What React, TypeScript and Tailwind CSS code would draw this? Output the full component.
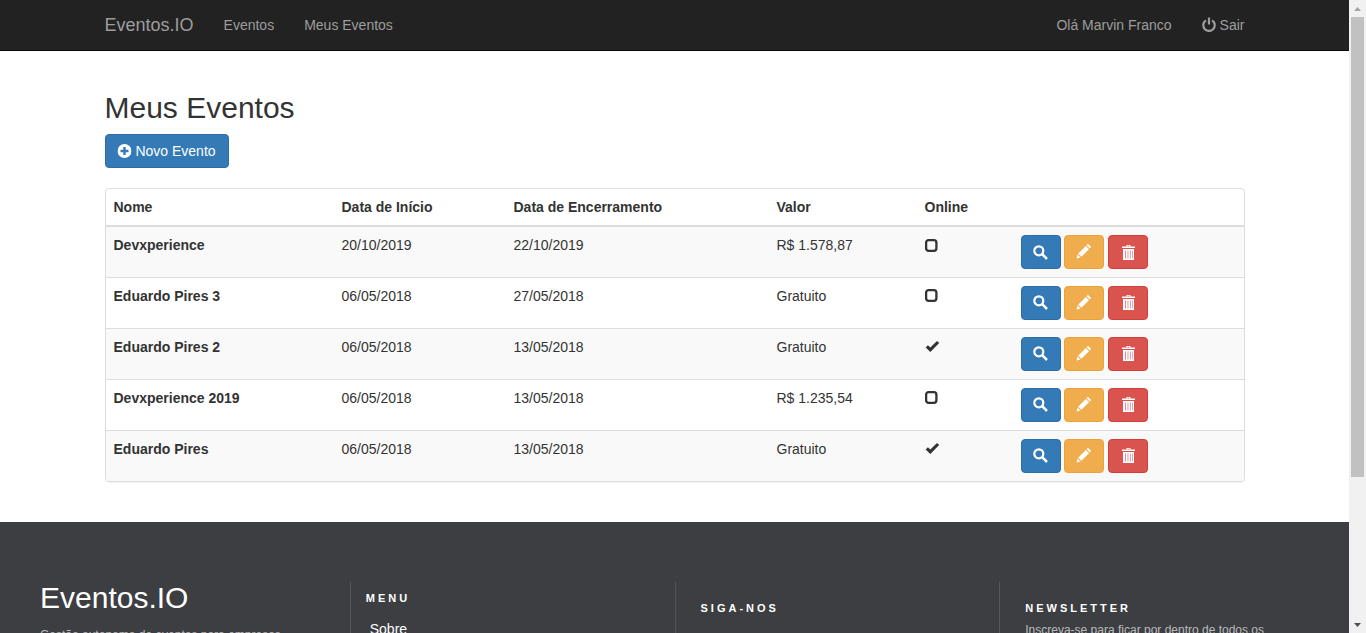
import React from "react";

const Off = () => (
  <svg width="14" height="15" viewBox="0 0 14 15" fill="none" stroke="currentColor" strokeWidth="2.200" className="-translate-y-[1px]">
    <path d="M4 3.400A5.700 5.700 0 1 0 10 3.400" />
    <path d="M7 0.500V7.500" />
  </svg>
);
const Plus = () => (
  <svg width="14" height="14" viewBox="0 0 14 14" className="translate-x-[0.500px]">
    <path fillRule="evenodd" fill="#fff" d="M7 0a7 7 0 1 1 0 14A7 7 0 0 1 7 0ZM5.800 3V5.800H3v2.400h2.800V11h2.400V8.200H11V5.800H8.200V3Z" />
  </svg>
);
const Search = () => (
  <svg width="15" height="15" viewBox="0 0 15 15" fill="none" stroke="#fff">
    <circle cx="5.800" cy="5.800" r="4.500" strokeWidth="2.200" />
    <path d="M9.200 9.200L14 14" strokeWidth="2.500" />
  </svg>
);
const Pencil = () => (
  <svg width="16" height="16" viewBox="0 0 15 15" fill="#fff" className="-translate-y-[1px]">
    <path d="M11.200 0.800L14.200 3.800L12.900 5.100L9.900 2.100ZM9.200 2.800L12.200 5.800L5 13L2 10ZM1.400 10.800L4.200 13.600L0.500 14.500Z" />
  </svg>
);
const Trash = () => (
  <svg width="14" height="15" viewBox="0 0 14 15" className="translate-x-[0.500px]">
    <path fill="#fff" d="M5 0h4v1.500h4.500V3H.5V1.500H5ZM6 .8v.7h2V.8Z" />
    <path fill="#fff" d="M1.500 4h11v11h-11Z" />
    <path fill="#e08a98" d="M3.500 5.500h1v8h-1ZM6 5.500h.9v8H6ZM8.400 5.500h.9v8h-.9ZM10.600 5.500h.7v8h-.7Z" />
  </svg>
);
const Unchecked = () => (
  <svg width="13" height="13" viewBox="0 0 13 13" fill="none" stroke="#333" strokeWidth="2.300">
    <rect x="1.100" y="1.200" width="10.300" height="10.600" rx="2.500" />
  </svg>
);
const Ok = () => (
  <svg width="15" height="13" viewBox="0 0 15 13" fill="#333">
    <path d="M5.300 12L0.700 7.400L2.900 5.200L5.300 7.600L12 0.900L14.200 3.100Z" />
  </svg>
);

const rows = [
  { n: "Devxperience", a: "20/10/2019", b: "22/10/2019", v: "R$ 1.578,87", on: false },
  { n: "Eduardo Pires 3", a: "06/05/2018", b: "27/05/2018", v: "Gratuito", on: false },
  { n: "Eduardo Pires 2", a: "06/05/2018", b: "13/05/2018", v: "Gratuito", on: true },
  { n: "Devxperience 2019", a: "06/05/2018", b: "13/05/2018", v: "R$ 1.235,54", on: false },
  { n: "Eduardo Pires", a: "06/05/2018", b: "13/05/2018", v: "Gratuito", on: true },
];

export default function App() {
  return (
    <div className="flex h-[633px] w-[1366px] overflow-hidden bg-white font-['Liberation_Sans',Arial,sans-serif] text-[14px] leading-[20px] text-[#333]">
      <div className="w-[1349px] shrink-0">
        <nav className="h-[51px] border-b border-[#080808] bg-[#222]">
          <div className="mx-auto flex h-[50px] w-[1170px] items-center px-[15px] text-[#9d9d9d]">
            <span className="text-[18px]">Eventos.IO</span>
            <span className="ml-[30px]">Eventos</span>
            <span className="ml-[30px]">Meus Eventos</span>
            <span className="ml-auto">Olá Marvin Franco</span>
            <span className="ml-[30px] flex items-center gap-[4px]"><Off /> Sair</span>
          </div>
        </nav>
        <main className="mx-auto h-[471px] w-[1170px] px-[15px]">
          <h1 className="pt-[37px] text-[30px] leading-[40px] font-normal">Meus Eventos</h1>
          <button className="mt-[6px] flex h-[34px] w-[124px] items-center justify-center gap-[4px] rounded-[4px] border border-[#2e6da4] bg-[#337ab7] text-white">
            <Plus /> Novo Evento
          </button>
          <div className="mt-[20px] overflow-hidden rounded-[4px] border border-[#ddd] shadow-[0_1px_1px_rgba(0,0,0,0.05)]">
            <table className="w-full table-fixed border-collapse">
              <colgroup>
                <col className="w-[228px]" />
                <col className="w-[172px]" />
                <col className="w-[263px]" />
                <col className="w-[148px]" />
                <col className="w-[96px]" />
                <col />
              </colgroup>
              <thead>
                <tr className="h-[37px] border-b-2 border-[#ddd] text-left">
                  <th className="px-2 font-bold">Nome</th>
                  <th className="px-2 font-bold">Data de Início</th>
                  <th className="px-2 font-bold">Data de Encerramento</th>
                  <th className="px-2 font-bold">Valor</th>
                  <th className="px-2 font-bold">Online</th>
                  <th />
                </tr>
              </thead>
              <tbody>
                {rows.map((r, i) => (
                  <tr key={r.n} className={`h-[51px] align-top ${i > 0 ? "border-t border-[#ddd]" : ""} ${i % 2 === 0 ? "bg-[#f9f9f9]" : "bg-white"}`}>
                    <td className="p-2 font-bold">{r.n}</td>
                    <td className="p-2">{r.a}</td>
                    <td className="p-2">{r.b}</td>
                    <td className="p-2">{r.v}</td>
                    <td className="p-2"><span className="flex h-[20px] items-center">{r.on ? <Ok /> : <Unchecked />}</span></td>
                    <td className="px-2 pt-[8px] pb-[7px]">
                      <div className="flex gap-[3.500px]">
                        <button className="flex h-[34px] w-[40px] items-center justify-center rounded-[4px] border border-[#2e6da4] bg-[#337ab7]"><Search /></button>
                        <button className="flex h-[34px] w-[40px] items-center justify-center rounded-[4px] border border-[#eea236] bg-[#f0ad4e]"><Pencil /></button>
                        <button className="flex h-[34px] w-[40px] items-center justify-center rounded-[4px] border border-[#d43f3a] bg-[#d9534f]"><Trash /></button>
                      </div>
                    </td>
                  </tr>
                ))}
              </tbody>
            </table>
          </div>
        </main>
        <footer className="h-[300px] bg-[#3d3e42] px-[25px] pt-[60px]">
          <div className="grid grid-cols-4">
            <div className="h-[200px] px-[15px]">
              <div className="text-[30px] leading-[32px] text-white">Eventos.IO</div>
              <p className="mt-[12px] text-[12px] leading-[18px] text-[#bbb]">Gestão autonoma de eventos para empresas</p>
            </div>
            <div className="h-[200px] border-l border-[#55565a] pl-[15px]">
              <h4 className="pt-[9px] text-[11px] leading-[14px] font-bold tracking-[3px] text-white">MENU</h4>
              <p className="mt-[14px] pl-[4px] text-[14px] text-white">Sobre</p>
            </div>
            <div className="h-[200px] border-l border-[#55565a] pl-[25px]">
              <h4 className="pt-[19px] text-[11px] leading-[14px] font-bold tracking-[3px] text-white">SIGA-NOS</h4>
            </div>
            <div className="h-[200px] border-l border-[#55565a] pl-[25px]">
              <h4 className="pt-[19px] text-[11px] leading-[14px] font-bold tracking-[3px] text-white">NEWSLETTER</h4>
              <p className="mt-[6px] text-[12px] leading-[18px] text-[#bbb]">Inscreva-se para ficar por dentro de todos os</p>
            </div>
          </div>
        </footer>
      </div>
      <div className="flex h-[633px] w-[17px] shrink-0 flex-col bg-[#f1f1f1]">
        <div className="flex h-[17px] items-center justify-center">
          <svg width="7" height="4" viewBox="0 0 7 4"><path d="M3.500 0L7 4H0Z" fill="#a3a3a3" /></svg>
        </div>
        <div className="mx-auto h-[460px] w-[13px] bg-[#c1c1c1]" />
        <div className="mt-auto flex h-[17px] items-center justify-center">
          <svg width="7" height="4" viewBox="0 0 7 4"><path d="M0 0H7L3.500 4Z" fill="#505050" /></svg>
        </div>
      </div>
    </div>
  );
}
